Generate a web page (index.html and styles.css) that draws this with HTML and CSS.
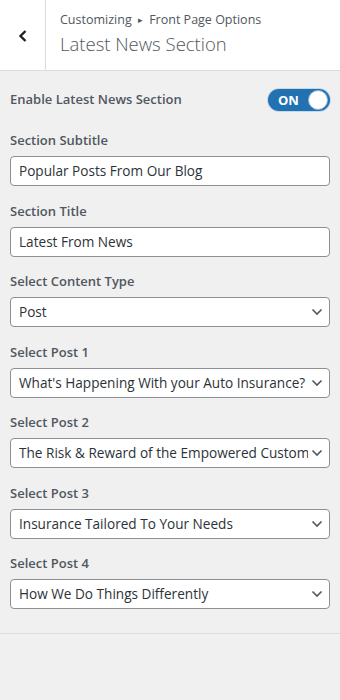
FILE: index.html
```html
<!DOCTYPE html>
<html lang="en">
<head>
<meta charset="utf-8">
<title>Latest News Section</title>
<link rel="stylesheet" href="styles.css">
</head>
<body>
<div class="panel">
  <header class="head">
    <div class="back">
      <svg width="12" height="14" viewBox="0 0 12 14"><polyline points="8.5,2 3.5,7 8.5,12" fill="none" stroke="#1d2327" stroke-width="2.4"/></svg>
    </div>
    <div class="titles">
      <div class="crumb">Customizing <span class="tri">&#9656;</span> Front Page Options</div>
      <div class="title">Latest News Section</div>
    </div>
  </header>
  <main class="body">
    <div class="toggle-row">
      <span class="label">Enable Latest News Section</span>
      <span class="toggle"><span class="on">ON</span><span class="knob"></span></span>
    </div>
    <div class="field">
      <div class="label">Section Subtitle</div>
      <div class="input">Popular Posts From Our Blog</div>
    </div>
    <div class="field">
      <div class="label">Section Title</div>
      <div class="input">Latest From News</div>
    </div>
    <div class="field">
      <div class="label">Select Content Type</div>
      <div class="input select"><span class="val">Post</span><svg class="chev" width="12" height="8" viewBox="0 0 12 8"><polyline points="1.5,1.5 6,6 10.5,1.5" fill="none" stroke="#50575e" stroke-width="1.6"/></svg></div>
    </div>
    <div class="field">
      <div class="label">Select Post 1</div>
      <div class="input select"><span class="val">What's Happening With your Auto Insurance?</span><svg class="chev" width="12" height="8" viewBox="0 0 12 8"><polyline points="1.5,1.5 6,6 10.5,1.5" fill="none" stroke="#50575e" stroke-width="1.6"/></svg></div>
    </div>
    <div class="field">
      <div class="label">Select Post 2</div>
      <div class="input select"><span class="val">The Risk &amp; Reward of the Empowered Customer</span><svg class="chev" width="12" height="8" viewBox="0 0 12 8"><polyline points="1.5,1.5 6,6 10.5,1.5" fill="none" stroke="#50575e" stroke-width="1.6"/></svg></div>
    </div>
    <div class="field">
      <div class="label">Select Post 3</div>
      <div class="input select"><span class="val">Insurance Tailored To Your Needs</span><svg class="chev" width="12" height="8" viewBox="0 0 12 8"><polyline points="1.5,1.5 6,6 10.5,1.5" fill="none" stroke="#50575e" stroke-width="1.6"/></svg></div>
    </div>
    <div class="field">
      <div class="label">Select Post 4</div>
      <div class="input select"><span class="val">How We Do Things Differently</span><svg class="chev" width="12" height="8" viewBox="0 0 12 8"><polyline points="1.5,1.5 6,6 10.5,1.5" fill="none" stroke="#50575e" stroke-width="1.6"/></svg></div>
    </div>
  </main>
</div>
</body>
</html>
```

FILE: styles.css
```css
* { box-sizing: border-box; }
html, body { margin: 0; padding: 0; }
body {
  background: #f0f0f1;
  font-family: "Open Sans", "Noto Sans", sans-serif;
  color: #3c434a;
  width: 340px;
  height: 700px;
  overflow: hidden;
}
.head {
  display: flex;
  height: 71px;
  background: #fff;
  border-bottom: 1px solid #dcdcde;
}
.back {
  width: 46px;
  border-right: 1px solid #dcdcde;
  display: flex;
  align-items: center;
  justify-content: center;
  padding-top: 2px;
}
.titles {
  padding: 10px 0 0 14px;
  color: #50575e;
}
.crumb {
  font-size: 12.5px;
  line-height: 20px;
}
.tri { font-size: 9px; vertical-align: 1px; margin: 0 3px; }
.title {
  font-size: 18.5px;
  font-weight: 300;
  line-height: 26px;
  margin-top: 1px;
}
.body {
  padding: 18px 10px 24px;
  border-bottom: 1px solid #dcdcde;
}
.toggle-row {
  display: flex;
  justify-content: space-between;
  align-items: center;
  height: 22px;
  margin-bottom: 19px;
}
.label {
  font-size: 13px;
  font-weight: 600;
  line-height: 20px;
  color: #50575e;
}
.toggle-row .label { margin-top: -2px; }
.toggle {
  width: 62px;
  height: 22px;
  border-radius: 11px;
  background: #2271b1;
  display: flex;
  align-items: center;
  justify-content: space-between;
  padding: 0 2px 0 10px;
  box-shadow: 0 0 0 1px #c5d9ea;
}
.on {
  color: #fff;
  font-weight: 700;
  font-size: 13px;
  line-height: 1;
}
.knob {
  width: 20px;
  height: 20px;
  border-radius: 50%;
  background: #fff;
  border: 1px solid #8fb4d4;
}
.field { margin-bottom: 14.5px; }
.field:last-child { margin-bottom: 0; }
.field .label { margin-bottom: 6px; }
.input {
  height: 30px;
  background: #fff;
  border: 1px solid #8c8f94;
  border-radius: 4px;
  padding: 0 8px;
  font-size: 13.6px;
  line-height: 28px;
  color: #2c3338;
  white-space: nowrap;
  overflow: hidden;
}
.select {
  display: flex;
  align-items: center;
  padding-right: 6px;
}
.val {
  flex: 1;
  min-width: 0;
  overflow: hidden;
  white-space: nowrap;
}
.chev { flex: none; margin-left: 3px; }
```
